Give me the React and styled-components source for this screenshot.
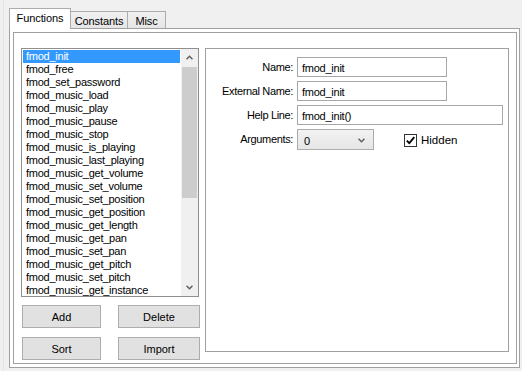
import styled, { createGlobalStyle, css } from "styled-components";

const GlobalStyle = createGlobalStyle`
  html, body {
    margin: 0;
    padding: 0;
    background: #f0f0f0;
  }
  body {
    font-family: "Liberation Sans", Arial, sans-serif;
    font-size: 11px;
    color: #000;
  }
`;

const functions = [
  "fmod_init",
  "fmod_free",
  "fmod_set_password",
  "fmod_music_load",
  "fmod_music_play",
  "fmod_music_pause",
  "fmod_music_stop",
  "fmod_music_is_playing",
  "fmod_music_last_playing",
  "fmod_music_get_volume",
  "fmod_music_set_volume",
  "fmod_music_set_position",
  "fmod_music_get_position",
  "fmod_music_get_length",
  "fmod_music_get_pan",
  "fmod_music_set_pan",
  "fmod_music_get_pitch",
  "fmod_music_set_pitch",
  "fmod_music_get_instance",
];

function Chevron({ up }) {
  return (
    <svg width="7" height="5" viewBox="0 0 7 5">
      <path
        d={up ? "M0.5 4.2 L3.5 1.2 L6.5 4.2" : "M0.5 0.8 L3.5 3.8 L6.5 0.8"}
        fill="none"
        stroke="#606060"
        strokeWidth="1.5"
      />
    </svg>
  );
}

function App() {
  return (
    <>
      <GlobalStyle />
      <Window>
        <TabStrip>
          <Tab active width={62}>Functions</Tab>
          <Tab width={58}>Constants</Tab>
          <Tab width={39}>Misc</Tab>
        </TabStrip>
        <TabPanel>
          <Frame>
            <LeftColumn>
              <ListBox>
                <Items>
                  {functions.map((name, i) => (
                    <Item key={name} selected={i === 0}>
                      {name}
                    </Item>
                  ))}
                </Items>
                <ScrollBar>
                  <ScrollArrow>
                    <Chevron up />
                  </ScrollArrow>
                  <Track>
                    <Thumb />
                  </Track>
                  <ScrollArrow>
                    <Chevron />
                  </ScrollArrow>
                </ScrollBar>
              </ListBox>
              <ButtonGrid>
                <Button>Add</Button>
                <Button>Delete</Button>
                <Button>Sort</Button>
                <Button>Import</Button>
              </ButtonGrid>
            </LeftColumn>
            <DetailBox>
              <Form>
                <Label>Name:</Label>
                <TextField width={150}>fmod_init</TextField>
                <Label>External Name:</Label>
                <TextField width={150}>fmod_init</TextField>
                <Label>Help Line:</Label>
                <TextField width={206}>fmod_init()</TextField>
                <Label>Arguments:</Label>
                <ArgRow>
                  <Select>
                    <span>0</span>
                    <Chevron />
                  </Select>
                  <CheckWrap>
                    <CheckBox>
                      <svg width="11" height="11" viewBox="0 0 11 11">
                        <path
                          d="M1.8 5.6 L4.3 8.2 L9.3 2.2"
                          fill="none"
                          stroke="#000"
                          strokeWidth="1.8"
                        />
                      </svg>
                    </CheckBox>
                    <CheckText>Hidden</CheckText>
                  </CheckWrap>
                </ArgRow>
              </Form>
            </DetailBox>
          </Frame>
        </TabPanel>
      </Window>
    </>
  );
}

const Window = styled.div`
  width: 522px;
  height: 371px;
  box-sizing: border-box;
  padding: 8px 2px 3px 9px;
  display: flex;
  flex-direction: column;
  background: #f0f0f0;
  box-shadow: inset 3px 0 0 #f0f0f0, inset 4px 0 0 #e3e3e3;
`;

const TabStrip = styled.div`
  height: 20px;
  display: flex;
  align-items: flex-end;
`;

const Tab = styled.div`
  box-sizing: border-box;
  width: ${({ width }) => width}px;
  height: 17px;
  border: 1px solid #acacac;
  border-bottom: none;
  margin-left: -1px;
  background: linear-gradient(#f0f0f0, #e6e6e6);
  display: flex;
  align-items: center;
  justify-content: center;
  padding-top: 1px;
  letter-spacing: -0.1px;

  &:first-child {
    margin-left: 0;
  }

  ${({ active }) =>
    active &&
    css`
      height: 21px;
      margin-bottom: -1px;
      background: #fff;
      position: relative;
      z-index: 1;
      align-items: flex-start;
      padding-top: 3px;
    `}
`;

const TabPanel = styled.div`
  flex: 1;
  display: flex;
  border: 1px solid #a0a0a0;
  background: #fff;
  padding: 3px 2px 3px 3px;
`;

const Frame = styled.div`
  flex: 1;
  display: flex;
  align-items: flex-start;
  gap: 6px;
  border: 1px solid #a0a0a0;
  padding: 15px 7px 3px 7px;
`;

const LeftColumn = styled.div`
  width: 178px;
  display: flex;
  flex-direction: column;
`;

const ListBox = styled.div`
  box-sizing: border-box;
  height: 249px;
  border: 1px solid #8f8f8f;
  display: flex;
  background: #fff;
`;

const Items = styled.div`
  flex: 1;
  padding: 1px;
  overflow: hidden;
`;

const Item = styled.div`
  height: 13px;
  line-height: 13px;
  padding-left: 3px;
  white-space: nowrap;
  letter-spacing: -0.25px;
  ${({ selected }) =>
    selected &&
    css`
      background: #3399ff;
      color: #fff;
    `}
`;

const ScrollBar = styled.div`
  width: 17px;
  display: flex;
  flex-direction: column;
  background: #f0f0f0;
`;

const ScrollArrow = styled.div`
  height: 17px;
  display: flex;
  align-items: center;
  justify-content: center;
`;

const Track = styled.div`
  flex: 1;
  padding: 1px 1px 0;
`;

const Thumb = styled.div`
  height: 131px;
  background: #cdcdcd;
`;

const ButtonGrid = styled.div`
  display: grid;
  grid-template-columns: 79px 82px;
  grid-auto-rows: 23px;
  column-gap: 17px;
  row-gap: 9px;
  margin: 8px 0 0 1px;
`;

const Button = styled.div`
  box-sizing: border-box;
  border: 1px solid #adadad;
  background: #e1e1e1;
  display: flex;
  align-items: center;
  justify-content: center;
`;

const DetailBox = styled.div`
  flex: 1;
  box-sizing: border-box;
  height: 304px;
  border: 1px solid #a0a0a0;
  padding-top: 8px;
`;

const Form = styled.div`
  display: grid;
  grid-template-columns: 87px 1fr;
  grid-auto-rows: 20px;
  column-gap: 4px;
  row-gap: 4px;
`;

const Label = styled.div`
  display: flex;
  align-items: center;
  justify-content: flex-end;
  letter-spacing: -0.35px;
  white-space: nowrap;
`;

const TextField = styled.div`
  box-sizing: border-box;
  width: ${({ width }) => width}px;
  height: 20px;
  border: 1px solid #a8a8a8;
  background: #fff;
  display: flex;
  align-items: center;
  padding-left: 4px;
  padding-top: 1px;
  letter-spacing: -0.25px;
`;

const ArgRow = styled.div`
  display: flex;
  align-items: center;
  gap: 30px;
`;

const Select = styled.div`
  box-sizing: border-box;
  width: 77px;
  height: 21px;
  margin-top: 1px;
  border: 1px solid #acacac;
  background: linear-gradient(#f2f2f2, #e6e6e6);
  display: flex;
  align-items: center;
  justify-content: space-between;
  padding: 2px 8px 0 6px;
`;

const CheckWrap = styled.div`
  display: flex;
  align-items: center;
  gap: 4px;
  margin-top: 2px;
`;

const CheckBox = styled.div`
  box-sizing: border-box;
  width: 13px;
  height: 13px;
  border: 1px solid #333;
  background: #fff;
  display: flex;
  align-items: center;
  justify-content: center;
`;

const CheckText = styled.span`
  font-size: 11.5px;
`;

export default App;
